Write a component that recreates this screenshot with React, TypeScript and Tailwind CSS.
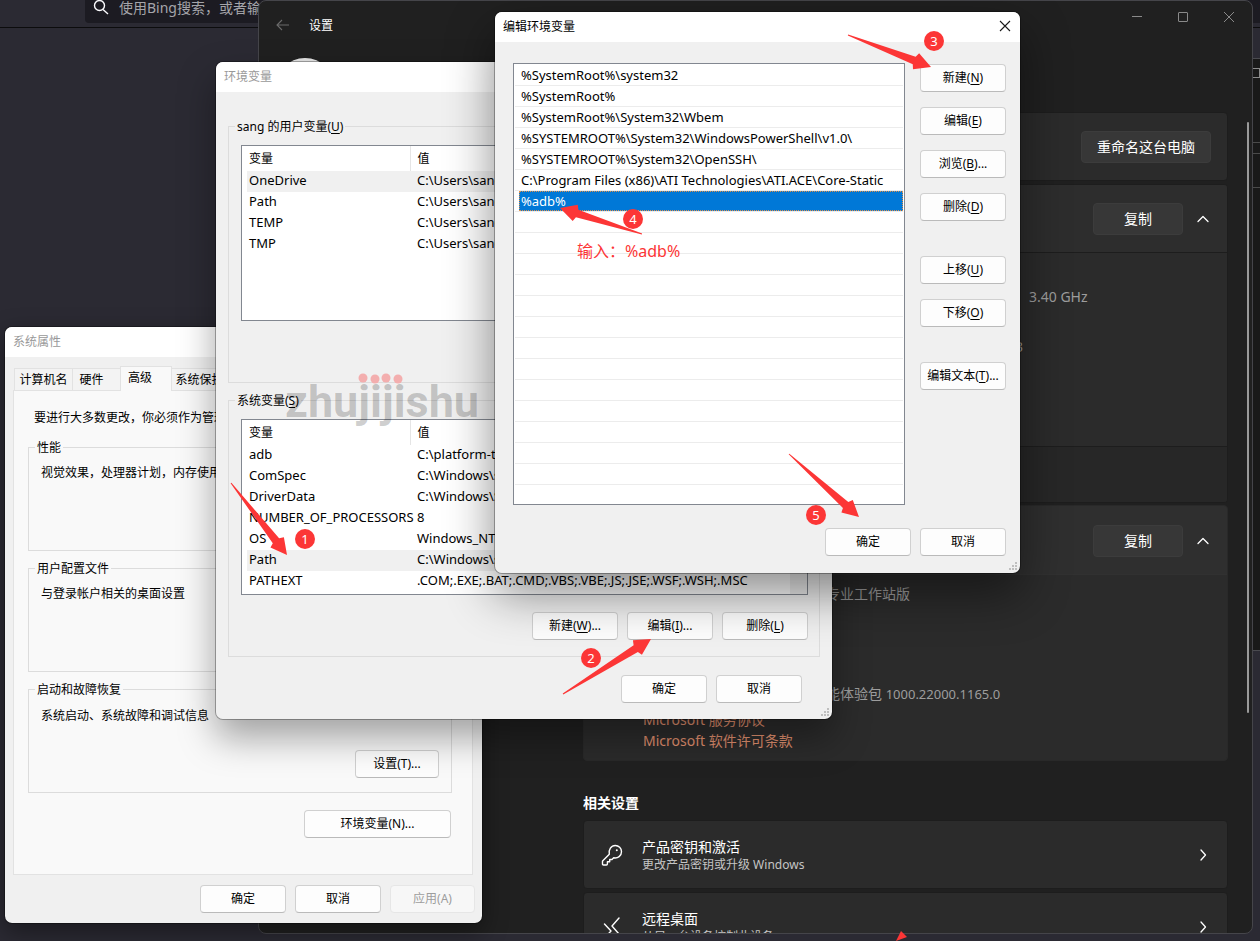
import { ReactNode } from 'react';
import { clsx } from 'clsx';

interface Variable {
  name: string;
  value: string;
  selected?: boolean;
}

const userVariables: Variable[] = [
  { name: 'OneDrive', value: 'C:\\Users\\sang', selected: true },
  { name: 'Path', value: 'C:\\Users\\sang' },
  { name: 'TEMP', value: 'C:\\Users\\sang' },
  { name: 'TMP', value: 'C:\\Users\\sang' },
];

const systemVariables: Variable[] = [
  { name: 'adb', value: 'C:\\platform-to' },
  { name: 'ComSpec', value: 'C:\\Windows\\s' },
  { name: 'DriverData', value: 'C:\\Windows\\S' },
  { name: 'NUMBER_OF_PROCESSORS', value: '8' },
  { name: 'OS', value: 'Windows_NT' },
  { name: 'Path', value: 'C:\\Windows\\s', selected: true },
  { name: 'PATHEXT', value: '.COM;.EXE;.BAT;.CMD;.VBS;.VBE;.JS;.JSE;.WSF;.WSH;.MSC' },
];

const pathEntries = [
  '%SystemRoot%\\system32',
  '%SystemRoot%',
  '%SystemRoot%\\System32\\Wbem',
  '%SYSTEMROOT%\\System32\\WindowsPowerShell\\v1.0\\',
  '%SYSTEMROOT%\\System32\\OpenSSH\\',
  'C:\\Program Files (x86)\\ATI Technologies\\ATI.ACE\\Core-Static',
  '%adb%',
];

const PATH_ROWS = 21;

const arrows = [
  { from: [231, 483], to: [287, 555] },
  { from: [563, 694], to: [651, 639] },
  { from: [848, 35], to: [931, 67] },
  { from: [642, 234], to: [560, 208] },
  { from: [789, 454], to: [859, 517] },
];

const steps = [
  { n: 1, x: 305, y: 539 },
  { n: 2, x: 591, y: 658 },
  { n: 3, x: 934, y: 41 },
  { n: 4, x: 633, y: 219 },
  { n: 5, x: 816, y: 515 },
];

const DialogButton = ({
  label,
  accessKey,
  suffix,
  disabled,
  className = 'w-[86px]',
}: {
  label: string;
  accessKey?: string;
  suffix?: string;
  disabled?: boolean;
  className?: string;
}) => (
  <button
    disabled={disabled}
    className={clsx(
      'h-7 shrink-0 whitespace-nowrap rounded border text-xs',
      disabled ? 'border-[#e6e6e6] bg-[#f7f7f7] text-[#9d9d9d]' : 'border-[#d0d0d0] border-b-[#bababa] bg-[#fdfdfd] text-black',
      className
    )}
  >
    {label}
    {accessKey && (
      <>
        (<span className="underline underline-offset-2">{accessKey}</span>)
      </>
    )}
    {suffix}
  </button>
);

const DialogWindow = ({ title, active, className, children }: { title: string; active?: boolean; className: string; children: ReactNode }) => (
  <section
    className={clsx(
      'absolute flex flex-col overflow-hidden rounded-lg border border-black/30 bg-[#f0f0f0] bg-clip-padding text-xs text-black',
      className
    )}
  >
    <header className="flex h-[30px] items-center justify-between bg-white pl-2 pr-[9px]">
      <h2 className={active ? 'text-black' : 'text-[#999999]'}>{title}</h2>
      {active && (
        <button aria-label="关闭" className="pb-0.5">
          <svg width="12" height="12" viewBox="0 0 12 12" fill="none" stroke="#1a1a1a" strokeWidth="1.1">
            <path d="M1 1l10 10M11 1L1 11" />
          </svg>
        </button>
      )}
    </header>
    {children}
  </section>
);

const Group = ({ legend, className, children }: { legend: ReactNode; className?: string; children: ReactNode }) => (
  <fieldset className={clsx('min-w-0 border border-[#dcdcdc]', className)}>
    <legend className="ml-1.5 px-0.5 pt-0.5 leading-[14px]">{legend}</legend>
    {children}
  </fieldset>
);

const VariableTable = ({ rows, scrollbar }: { rows: Variable[]; scrollbar?: boolean }) => (
  <div className="mt-[11px] flex h-44 overflow-hidden border border-[#828790] bg-white">
    <div className="min-w-0 flex-1 pl-[5px]">
      <table className="w-full table-fixed text-left">
        <thead>
          <tr className="h-[25px]">
            <th className="w-[163px] border-r border-[#e5e5e5] pl-0.5 font-normal">变量</th>
            <th className="pl-[7px] font-normal">值</th>
          </tr>
        </thead>
        <tbody>
          {rows.map((row) => (
            <tr key={row.name} className={clsx('h-[21px] whitespace-nowrap text-[13px] leading-[19px]', row.selected && 'bg-[#f0f0f0]')}>
              <td className="pb-0.5 pl-0.5">{row.name}</td>
              <td className="pb-0.5 pl-[7px]">{row.value}</td>
            </tr>
          ))}
        </tbody>
      </table>
    </div>
    {scrollbar && <div className="w-[17px] bg-[#f0f0f0]" />}
  </div>
);

const ResizeGrip = () => (
  <svg className="absolute bottom-0.5 right-0.5" width="9" height="9" viewBox="0 0 9 9" fill="#bfbfbf">
    <path d="M6 0h2v2H6zM3 3h2v2H3zM6 3h2v2H6zM0 6h2v2H0zM3 6h2v2H3zM6 6h2v2H6z" />
  </svg>
);

const Chevron = ({ up }: { up?: boolean }) => (
  <svg width="16" height="16" viewBox="0 0 16 16" fill="none" stroke="#ffffff" strokeWidth="1.3" strokeLinecap="round" strokeLinejoin="round">
    <path d={up ? 'M3 10.5l5-5 5 5' : 'M6 3l4.5 5L6 13'} />
  </svg>
);

const SettingsButton = ({ children, className }: { children: ReactNode; className: string }) => (
  <button className={clsx('h-8 rounded border border-[#3c3c3c] bg-[#373737] text-sm text-white', className)}>{children}</button>
);

const RelatedCard = ({ icon, title, description }: { icon: ReactNode; title: string; description: string }) => (
  <a href="#" className="flex h-[69px] shrink-0 items-center rounded border border-[#1d1d1d] bg-[#2b2b2b] px-4">
    {icon}
    <div className="ml-[18px] flex-1">
      <p className="text-sm leading-5 text-white">{title}</p>
      <p className="text-xs leading-4 text-[#c5c5c5]">{description}</p>
    </div>
    <Chevron />
  </a>
);

const BrowserBackdrop = () => (
  <>
    <header className="flex h-7 items-start justify-between border-b border-[#0c0c0d] pl-[85px]">
      <label className="flex h-[23px] w-80 items-start rounded-b bg-[#1c1b22] pl-2">
        <svg className="shrink-0" width="16" height="16" viewBox="0 0 16 16" fill="none" stroke="#fbfbfe" strokeWidth="1.4">
          <circle cx="6.5" cy="5.5" r="5" />
          <path d="M10 9.5l5 4.500" />
        </svg>
        <input
          className="-mt-1 ml-2.5 h-[22px] w-60 bg-transparent text-sm placeholder:text-[#a5a5aa] focus:outline-none"
          placeholder="使用Bing搜索，或者输"
          aria-label="搜索"
        />
      </label>
      <div className="h-[23px] w-4 bg-[#1c1b22]" />
    </header>
    {/* Sliver of the window behind settings */}
    <div className="absolute right-0 top-[58px] h-[593px] w-[7px] border-y border-[#4a4a4f] bg-[#191919]">
      <div className="mt-[9px] h-2.5 border border-l-0 border-[#8a8a8a]" />
      <div className="mt-16 h-3 border-y border-[#4a4a4a]" />
      <div className="mt-[33px] border-b border-[#4a4a4a]" />
    </div>
  </>
);

const SettingsWindow = () => (
  <section className="absolute bottom-[7px] left-[258px] right-[7px] top-0 flex flex-col overflow-hidden rounded-lg border border-[#45454a] bg-[#202020] text-sm">
    <header className="flex h-12 shrink-0 pl-[17px] text-xs leading-[50px] text-white">
      <button aria-label="返回">
        <svg width="14" height="12" viewBox="0 0 14 12" fill="none" stroke="#6a6a6a" strokeWidth="1.1">
          <path d="M13 6H1M6 1L1 6l5 5" />
        </svg>
      </button>
      <h1 className="ml-[19px] flex-1">设置</h1>
      <button aria-label="最小化" className="flex h-8 w-[46px] items-center justify-center">
        <svg width="10" height="16" viewBox="0 0 10 16" stroke="#8a8a8a">
          <path d="M0 7.500h10" />
        </svg>
      </button>
      <button aria-label="最大化" className="flex h-8 w-[46px] items-center justify-center">
        <svg width="10" height="16" viewBox="0 0 10 16" fill="none" stroke="#8a8a8a">
          <rect x="0.5" y="3.500" width="9" height="9" rx="0.5" />
        </svg>
      </button>
      <button aria-label="关闭" className="flex h-8 w-[46px] items-center justify-center">
        <svg width="10" height="16" viewBox="0 0 10 16" fill="none" stroke="#8a8a8a">
          <path d="M0 3l10 10M10 3L0 13" />
        </svg>
      </button>
    </header>

    <div className="flex min-h-0 flex-1">
      <aside className="w-[324px] shrink-0 pl-4 pt-[9px]">
        <div className="size-[60px] rounded-full bg-[#e4e4e4]" />
      </aside>

      <main className="flex min-w-0 flex-1 flex-col overflow-hidden pt-[63px]">
        <div className="flex h-[69px] shrink-0 items-center justify-end rounded border border-[#1d1d1d] bg-[#2b2b2b] pr-4">
          <SettingsButton className="w-[130px]">重命名这台电脑</SettingsButton>
        </div>

        <div className="mt-[3px] shrink-0 overflow-hidden rounded border border-[#1d1d1d] bg-[#2b2b2b]">
          <div className="flex h-[68px] items-center justify-end gap-3 border-b border-[#1d1d1d] bg-[#2d2d2d] pr-4">
            <SettingsButton className="w-[90px]">复制</SettingsButton>
            <Chevron up />
          </div>
          <div className="h-[194px] border-b border-[#1d1d1d] pt-[34px] leading-5 text-[#9d9d9d]">
            <p className="pl-[445px]">3.40 GHz</p>
            <p className="mt-[30px] pl-[431px]">3</p>
          </div>
          <div className="h-[55px] bg-[#272727]" />
        </div>

        <div className="mt-0.5 shrink-0 overflow-hidden rounded border border-[#292929] bg-[#2b2b2b]">
          <div className="flex h-[69px] items-center justify-end gap-3 border-b border-[#313131] bg-[#2f2f2f] pr-4 pt-0.5">
            <SettingsButton className="w-[90px]">复制</SettingsButton>
            <Chevron up />
          </div>
          <div className="h-[185px] pt-[9px] leading-5 text-[#9d9d9d]">
            <p className="pl-[242px]">专业工作站版</p>
            <p className="mt-20 pl-[242px]">
              能体验包 <span className="text-[13px]">1000.22000.1165.0</span>
            </p>
            <div className="mt-[5px] flex flex-col items-start pl-[59px] leading-[21px] text-[#e0906f]">
              <a href="#">Microsoft 服务协议</a>
              <a href="#">Microsoft 软件许可条款</a>
            </div>
          </div>
        </div>

        <h2 className="mt-8 font-bold leading-5 text-white">相关设置</h2>
        <div className="mt-[7px] flex flex-col gap-[3px]">
          <RelatedCard
            title="产品密钥和激活"
            description="更改产品密钥或升级 Windows"
            icon={
              <svg width="24" height="24" viewBox="0 0 24 24" fill="none" stroke="#ffffff" strokeWidth="1.4" strokeLinejoin="round">
                <path d="M9.300 11.200c-.9-4.300 1.800-8.700 6-8.700 3.400 0 6.200 2.800 6.200 6.200 0 4.200-3.700 6.900-7.800 6.100l-1.700 1.700H9.700v2.300H7.400v2.200c0 .6-.4 1-1 1H3.500c-.6 0-1-.4-1-1v-2.500c0-.3.1-.5.3-.7z" />
                <circle cx="16.800" cy="7.200" r="1" fill="#ffffff" stroke="none" />
              </svg>
            }
          />
          <RelatedCard
            title="远程桌面"
            description="从另一台设备控制此设备"
            icon={
              <svg width="24" height="24" viewBox="0 0 24 24" fill="none" stroke="#ffffff" strokeWidth="1.400" strokeLinecap="round" strokeLinejoin="round">
                <path d="M19 3l-7 8 7 8M4.500 9l6.500 7-6.500 7" />
              </svg>
            }
          />
        </div>
      </main>

      <div className="flex w-6 shrink-0 justify-end pr-[3px] pt-[73px]">
        <div className="h-[591px] w-0.5 rounded-full bg-[#9a9a9a]" />
      </div>
    </div>
  </section>
);

const SystemProperties = () => (
  <DialogWindow title="系统属性" className="left-1 top-[326px] w-[479px] shadow-[0_8px_24px_rgba(0,0,0,0.4)]">
    <div className="pb-2.5 pl-2 pr-[9px] pt-[9px]">
      <div role="tablist" className="flex h-6 items-end whitespace-nowrap pl-px">
        <button role="tab" className="h-[22px] w-[59px] border border-b-0 border-[#e2e2e2] bg-[#f3f3f3]">计算机名</button>
        <button role="tab" className="h-[22px] w-[47px] border-t border-[#e2e2e2] bg-[#f3f3f3] pr-2.5">硬件</button>
        <button role="tab" aria-selected="true" className="relative -mb-px h-[25px] w-[52px] border border-b-0 border-[#e2e2e2] bg-[#f9f9f9] pb-0.5 pr-3">
          高级
        </button>
        <button role="tab" className="h-[22px] w-14 border border-b-0 border-l-0 border-[#e2e2e2] bg-[#f3f3f3]">系统保护</button>
      </div>
      <div className="flex h-[485px] flex-col border border-[#e2e2e2] bg-[#f9f9f9] pl-3.5 pr-5 pt-[19px] leading-4">
        <p className="pl-1.5">要进行大多数更改，你必须作为管理</p>
        <Group legend="性能" className="mt-[13px] h-28">
          <p className="mt-2.5 pl-3">视觉效果，处理器计划，内存使用</p>
        </Group>
        <Group legend="用户配置文件" className="mt-[9px] h-28">
          <p className="mt-2.5 pl-3">与登录帐户相关的桌面设置</p>
        </Group>
        <Group legend="启动和故障恢复" className="mt-[9px] h-28">
          <p className="mt-[11px] pl-3">系统启动、系统故障和调试信息</p>
          <div className="mt-[26px] flex justify-end pr-3">
            <DialogButton label="设置(T)..." className="w-[84px]" />
          </div>
        </Group>
        <DialogButton label="环境变量(N)..." className="mr-px mt-[17px] w-[147px] self-end" />
      </div>
      <div className="-mr-0.5 mt-2.5 flex justify-end gap-[9px]">
        <DialogButton label="确定" />
        <DialogButton label="取消" />
        <DialogButton label="应用(A)" disabled className="w-[85px]" />
      </div>
    </div>
  </DialogWindow>
);

const EnvironmentVariables = () => (
  <DialogWindow title="环境变量" className="left-[215px] top-[61px] w-[618px] shadow-[0_18px_36px_rgba(0,0,0,0.35)]">
    <div className="px-3 pb-4 pt-[26px]">
      <Group
        legend={
          <>
            sang 的用户变量(<span className="underline underline-offset-2">U</span>)
          </>
        }
      >
        <div className="pb-[61px] pl-3 pr-[11px]">
          <VariableTable rows={userVariables} />
        </div>
      </Group>
      <Group
        legend={
          <>
            系统变量(<span className="underline underline-offset-2">S</span>)
          </>
        }
        className="mt-[9px]"
      >
        <div className="pb-4 pl-3 pr-[11px]">
          <VariableTable rows={systemVariables} scrollbar />
          <div className="mt-[17px] flex justify-end gap-[9px]">
            <DialogButton label="新建" accessKey="W" suffix="..." />
            <DialogButton label="编辑" accessKey="I" suffix="..." />
            <DialogButton label="删除" accessKey="L" />
          </div>
        </div>
      </Group>
      <div className="mt-[18px] flex justify-end gap-[9px] pr-[18px]">
        <DialogButton label="确定" />
        <DialogButton label="取消" />
      </div>
    </div>
    <ResizeGrip />
  </DialogWindow>
);

const EditVariable = () => (
  <DialogWindow title="编辑环境变量" active className="left-[494px] top-[11px] w-[527px] shadow-[0_20px_48px_rgba(0,0,0,0.45)]">
    <div className="pb-[17px] pl-[18px] pr-3.5 pt-[21px]">
      <div className="flex gap-[15px]">
        <ul className="h-[442px] min-w-0 flex-1 overflow-hidden border border-[#828790] bg-white px-px pt-px text-[13px]">
          {Array.from({ length: PATH_ROWS }, (_, i) => {
            const selected = i === pathEntries.length - 1;
            return (
              <li key={i} className="h-[21px] border-b border-[#ececec] pl-1">
                <div className={clsx('h-5 truncate border px-px leading-[18px]', selected ? 'border-dotted border-[#e0904a] bg-[#0078d7] text-white' : 'border-transparent')}>
                  {pathEntries[i]}
                </div>
              </li>
            );
          })}
        </ul>
        <div className="flex flex-col gap-[15px] pt-px">
          <DialogButton label="新建" accessKey="N" />
          <DialogButton label="编辑" accessKey="E" />
          <DialogButton label="浏览" accessKey="B" suffix="..." />
          <DialogButton label="删除" accessKey="D" />
          <DialogButton label="上移" accessKey="U" className="mt-5 w-[86px]" />
          <DialogButton label="下移" accessKey="O" />
          <DialogButton label="编辑文本" accessKey="T" suffix="..." className="mt-5 w-[86px]" />
        </div>
      </div>
      <div className="mt-[23px] flex justify-end gap-[9px]">
        <DialogButton label="确定" />
        <DialogButton label="取消" />
      </div>
    </div>
    <ResizeGrip />
  </DialogWindow>
);

const Watermark = () => (
  <div className="pointer-events-none absolute left-[285px] top-[369px]">
    <span className="font-['Roboto',sans-serif] text-[45px] font-bold leading-[66px] text-black/20">zhujijishu</span>
    <svg className="absolute left-0 top-0" width="194" height="64" viewBox="0 0 194 64" fill="#f3aeae">
      <circle cx="78" cy="9" r="4.500" />
      <circle cx="90" cy="10" r="4.500" />
      <circle cx="101" cy="9" r="4.500" />
      <circle cx="113" cy="10" r="4.500" />
    </svg>
  </div>
);

const Annotations = () => (
  <div className="pointer-events-none absolute inset-0">
    <svg className="absolute left-0 top-0" width="1260" height="941" viewBox="0 0 1260 941" fill="#fc3636">
      {arrows.map(({ from, to }) => {
        const dx = to[0] - from[0];
        const dy = to[1] - from[1];
        const length = Math.hypot(dx, dy);
        const angle = (Math.atan2(dy, dx) * 180) / Math.PI;
        return (
          <polygon
            key={from.join()}
            points={`0,0 -16,-8.5 -18,-4 ${-length},-0.5 ${-length},0.5 -18,4 -16,8.5`}
            transform={`translate(${to[0]} ${to[1]}) rotate(${angle})`}
          />
        );
      })}
      <polygon points="901,931 907,937 896,941" />
    </svg>
    {steps.map((step) => (
      <span
        key={step.n}
        className="absolute flex size-5 -translate-x-1/2 -translate-y-1/2 items-center justify-center rounded-full bg-[#fc3636] text-[13px] leading-5 text-white"
        style={{ left: step.x, top: step.y }}
      >
        {step.n}
      </span>
    ))}
    <p className="absolute left-[577px] top-[239px] text-base leading-6 text-[#fc3636]">输入：%adb%</p>
  </div>
);

const App = () => (
  <div className="relative h-screen overflow-hidden bg-[#2b2a33] font-['Noto_Sans','Noto_Sans_CJK_SC',sans-serif]">
    <BrowserBackdrop />
    <SettingsWindow />
    <SystemProperties />
    <EnvironmentVariables />
    <Watermark />
    <EditVariable />
    <Annotations />
  </div>
);

export default App;
